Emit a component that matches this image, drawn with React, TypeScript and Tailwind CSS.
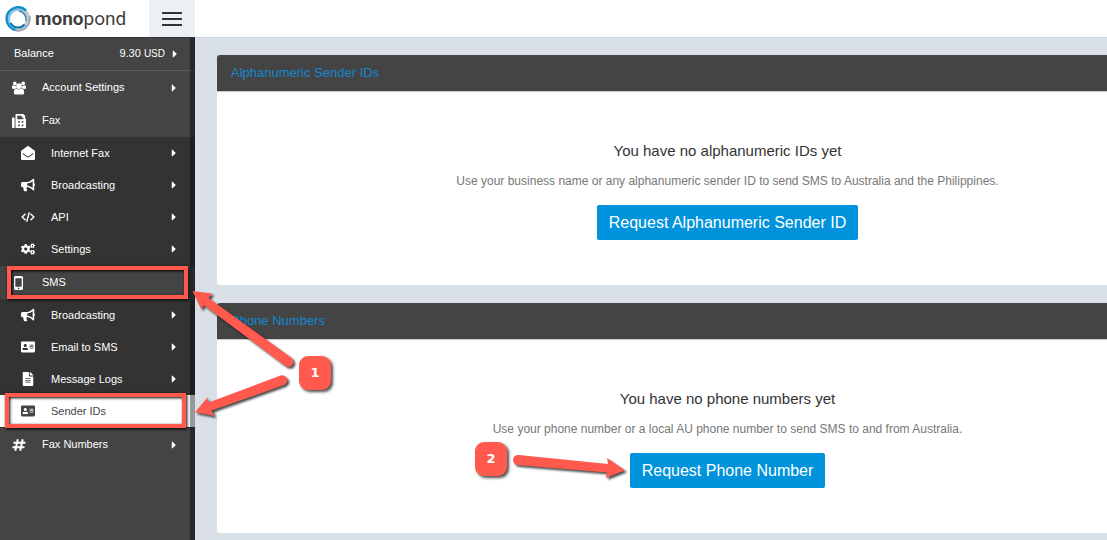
import React from "react";
import {
  FaAddressCard,
  FaBullhorn,
  FaCaretRight,
  FaCogs,
  FaEnvelopeOpen,
  FaFax,
  FaFileAlt,
} from "react-icons/fa";
import type { IconType } from "react-icons";

type IconProps = { className?: string };

function UsersIcon({ className }: IconProps) {
  return (
    <svg viewBox="0 0 30 28" fill="currentColor" className={className} aria-hidden="true">
      <path d="M9.27 14c-1.63.05-3.06.75-4.11 2H3.08C1.39 16 0 15.19 0 13.34 0 12 -.05 8 2.05 8c.34 0 2.06 1.41 4.28 1.41.77 0 1.5-.13 2.22-.38A8.2 8.2 0 0 0 8.5 10c0 1.42.45 2.83 1.27 4ZM26 23.95C26 26.48 24.33 28 21.83 28H8.17C5.67 28 4 26.48 4 23.95 4 20.42 4.83 15 9.4 15c.53 0 2.47 2.17 5.6 2.17S20.07 15 20.6 15c4.57 0 5.4 5.42 5.4 8.95ZM10 4a4 4 0 1 1-8 0 4 4 0 0 1 8 0Zm11 6a6 6 0 1 1-12 0 6 6 0 0 1 12 0Zm9 3.34C30 15.19 28.61 16 26.92 16h-2.08c-1.05-1.25-2.48-1.95-4.11-2 .82-1.17 1.27-2.58 1.27-4a8.2 8.2 0 0 0-.05-.97c.72.25 1.45.38 2.22.38C26.39 9.41 27.61 8 27.95 8 30.05 8 30 12 30 13.34ZM28 4a4 4 0 1 1-8 0 4 4 0 0 1 8 0Z" />
    </svg>
  );
}

function MobileIcon({ className }: IconProps) {
  return (
    <svg viewBox="0 0 14 14" fill="currentColor" className={className} aria-hidden="true">
      <path
        fillRule="evenodd"
        d="M3.500 0h6A1.500 1.500 0 0 1 11 1.500v11A1.500 1.500 0 0 1 9.500 14h-6A1.500 1.500 0 0 1 2 12.500v-11A1.500 1.500 0 0 1 3.500 0ZM3.300 2.300v8.400h6.400V2.300ZM6.500 11.600a.8.8 0 1 0 0 1.600.8.8 0 0 0 0-1.600Z"
      />
    </svg>
  );
}

function HashIcon({ className }: IconProps) {
  return (
    <svg viewBox="0 0 14 14" fill="none" stroke="currentColor" strokeWidth="2" className={className} aria-hidden="true">
      <path d="M5.800 1.200 3.300 12.800M10.700 1.200 8.200 12.800M1.500 4.700h12M.5 9.300h12" />
    </svg>
  );
}

function CodeIcon({ className }: IconProps) {
  return (
    <svg viewBox="0 0 14 14" fill="none" stroke="currentColor" strokeWidth="1.400" className={className} aria-hidden="true">
      <path d="M4.500 3.800 1.200 7l3.300 3.200M9.500 3.800 12.800 7l-3.300 3.200M8.300 2.200 5.700 11.800" />
    </svg>
  );
}

type Item = {
  label: string;
  icon: IconType | typeof UsersIcon;
  caret?: boolean;
  active?: boolean;
};

const faxItems: Item[] = [
  { label: "Internet Fax", icon: FaEnvelopeOpen, caret: true },
  { label: "Broadcasting", icon: FaBullhorn, caret: true },
  { label: "API", icon: CodeIcon, caret: true },
  { label: "Settings", icon: FaCogs, caret: true },
];

const smsItems: Item[] = [
  { label: "Broadcasting", icon: FaBullhorn, caret: true },
  { label: "Email to SMS", icon: FaAddressCard, caret: true },
  { label: "Message Logs", icon: FaFileAlt, caret: true },
  { label: "Sender IDs", icon: FaAddressCard, active: true },
];

function TopItem({ label, icon: Icon, caret }: Item) {
  return (
    <a href="#" className="flex h-[33px] items-center pr-[15px] pl-3 text-white">
      <Icon className="size-[14px] shrink-0" />
      <span className="ml-4 flex-1">{label}</span>
      {caret && <FaCaretRight className="size-3" />}
    </a>
  );
}

function SubMenu({ items }: { items: Item[] }) {
  return (
    <ul className="bg-[#333333] pb-px">
      {items.map(({ label, icon: Icon, caret, active }) => (
        <li key={label}>
          <a
            href="#"
            aria-current={active ? "page" : undefined}
            className={
              active
                ? "flex h-8 items-center bg-white pr-[15px] pl-[21px] text-[#444444]"
                : "flex h-8 items-center pr-[15px] pl-[21px] text-white"
            }
          >
            <Icon className="size-[14px] shrink-0" />
            <span className="ml-4 flex-1">{label}</span>
            {caret && <FaCaretRight className="size-3" />}
          </a>
        </li>
      ))}
    </ul>
  );
}

function Logo() {
  return (
    <a href="#" className="flex items-center gap-1 pl-[5px] text-[#3f3f41]">
      <svg viewBox="0 0 26 26" className="size-[26px]" fill="none" aria-hidden="true">
        <circle cx="13" cy="13" r="10.200" stroke="#c3c9cd" strokeWidth="4.500" />
        <path d="M21 4.500A11.500 11.500 0 0 0 1.600 13a11.500 11.500 0 0 0 9 11" stroke="#1490cc" strokeWidth="2.500" />
        <path d="M17 4A9.500 9.500 0 0 0 4.500 9.500a10 10 0 0 0 4.500 12.500" stroke="#7cc4e4" strokeWidth="1.500" />
        <path d="M11 24.600A12 12 0 0 0 24.500 10" stroke="#9aa3a9" strokeWidth="1.500" />
        <path d="M14 5a8.500 8.500 0 0 1 7 10" stroke="#2b86b4" strokeWidth="1.500" />
        <path d="M5.500 17a8.500 8.500 0 0 0 14 1.500" stroke="#0a7ab5" strokeWidth="2" />
      </svg>
      <span className="font-['Roboto',sans-serif] text-[19px] leading-6">
        <span className="font-bold">mono</span>
        <span className="font-normal">pond</span>
      </span>
    </a>
  );
}

type PanelProps = { title: string; heading: string; text: string; action: string };

function Panel({ title, heading, text, action }: PanelProps) {
  return (
    <section className="overflow-hidden rounded-l-[3px] bg-white">
      <h2 className="h-9 bg-[#444444] px-[14px] text-[13px] leading-9 text-[#1289d0]">{title}</h2>
      <div className="flex flex-col items-center border-t border-[#c8c8c8] pt-[49px] pb-[45px] pl-[131px]">
        <h3 className="text-[15px] leading-5 text-[#333333]">{heading}</h3>
        <p className="mt-3 text-[12px] leading-4 text-[#777777]">{text}</p>
        <button
          type="button"
          className="mt-4 h-[35px] rounded-[2px] bg-[#0093dc] px-3 text-[16px] leading-5 text-white"
        >
          {action}
        </button>
      </div>
    </section>
  );
}

function Badge({ children }: { children: React.ReactNode }) {
  return (
    <span className="flex h-[34px] w-8 items-center justify-center rounded-[9px] bg-[#ff5a4d] font-['DejaVu_Sans',sans-serif] text-[13px] font-bold text-white shadow-[2px_2px_3px_rgba(0,0,0,0.7)]">
      {children}
    </span>
  );
}

function Annotations() {
  return (
    <div className="pointer-events-none absolute inset-0 overflow-hidden">
      <div className="absolute top-[266px] left-[7px] h-[33px] w-[181px] border-4 border-[#ff5a4d] shadow-[1px_1px_3px_#000,inset_1px_1px_3px_#000]" />
      <div className="absolute top-[393px] left-[5px] h-[35px] w-[181px] border-4 border-[#ff5a4d] shadow-[1px_1px_3px_#000,inset_1px_1px_3px_#000]" />
      <svg
        width="640"
        height="540"
        viewBox="0 0 640 540"
        fill="#ff5a4d"
        className="absolute top-0 left-0 drop-shadow-[2px_2px_1px_rgba(0,0,0,0.7)]"
        aria-hidden="true"
      >
        <path d="M192.500 291 212.500 293.500 208.500 298 291 357.500A4.800 4.800 0 0 1 285.500 366L203.500 305 201.500 309.500Z" />
        <path d="M195 412.300 207.300 397.500 208.700 402.500 280.500 375.500A4.800 4.800 0 0 1 284 385L211.500 410.500 214.300 416Z" />
        <path d="M625 470.300 607 458 608 464 518.500 455A5 5 0 0 0 517.500 465L607 472.500 605.700 478Z" />
      </svg>
      <div className="absolute top-[356px] left-[299px]">
        <Badge>1</Badge>
      </div>
      <div className="absolute top-[442px] left-[475px]">
        <Badge>2</Badge>
      </div>
    </div>
  );
}

export default function App() {
  return (
    <div className="relative flex min-h-screen flex-col overflow-hidden bg-[#d9e0e8] font-['Liberation_Sans',Arial,sans-serif] text-[11px]">
      <header className="flex h-[37px] bg-white">
        <div className="flex w-[195px] justify-between">
          <Logo />
          <button
            type="button"
            aria-label="Toggle menu"
            className="flex w-[46px] flex-col items-center justify-center gap-1 bg-[#edf0f5]"
          >
            <span className="h-[2px] w-5 bg-[#333333]" />
            <span className="h-[2px] w-5 bg-[#333333]" />
            <span className="h-[2px] w-5 bg-[#333333]" />
          </button>
        </div>
      </header>
      <div className="flex flex-1">
        <nav className="w-[195px] shrink-0 border-t border-[#333333] bg-[#444444]">
          <div className="relative h-full">
            <a
              href="#"
              className="flex h-[33px] items-center border-b border-[#5c5c5c] pr-[14px] pb-px pl-[14px] text-white"
            >
              <span className="flex-1">Balance</span>
              <span>
                9.30 <span className="text-[10px]">USD</span>
              </span>
              <FaCaretRight className="ml-1 size-3" />
            </a>
            <TopItem label="Account Settings" icon={UsersIcon} caret />
            <TopItem label="Fax" icon={FaFax} />
            <SubMenu items={faxItems} />
            <TopItem label="SMS" icon={MobileIcon} />
            <SubMenu items={smsItems} />
            <TopItem label="Fax Numbers" icon={HashIcon} caret />
            <div className="absolute inset-y-0 right-0 w-[5px] bg-black/40" />
          </div>
        </nav>
        <main className="flex min-w-0 flex-1 flex-col gap-[18px] border-t border-[#cdd4dc] pt-[17px] pb-[7px] pl-[22px]">
          <Panel
            title="Alphanumeric Sender IDs"
            heading="You have no alphanumeric IDs yet"
            text="Use your business name or any alphanumeric sender ID to send SMS to Australia and the Philippines."
            action="Request Alphanumeric Sender ID"
          />
          <Panel
            title="Phone Numbers"
            heading="You have no phone numbers yet"
            text="Use your phone number or a local AU phone number to send SMS to and from Australia."
            action="Request Phone Number"
          />
        </main>
      </div>
      <Annotations />
    </div>
  );
}
